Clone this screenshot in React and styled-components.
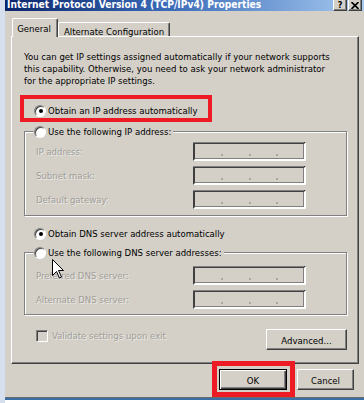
import React from "react";
import styled, { createGlobalStyle, css } from "styled-components";

const FONT = `"DejaVu Sans Condensed", "Liberation Sans", Arial, sans-serif`;
const FACE = "#d4d0c8";
const SHADOW = "#808080";
const DARK = "#404040";
const RED = "#ed1c24";

const Global = createGlobalStyle`
  html, body { margin: 0; padding: 0; background: #d5dfee; }
  body { font-family: ${FONT}; font-size: 9.5px; color: #000; }
  #root { width: 364px; height: 403px; overflow: hidden; }
  * { box-sizing: border-box; }
`;

const Screen = styled.div`
  width: 364px;
  height: 403px;
  display: flex;
  padding-left: 5px;
`;

const Window = styled.div`
  flex: 1;
  display: flex;
  flex-direction: column;
  background: #fff;
`;

const TitleBar = styled.div`
  height: 11px;
  flex: none;
  display: flex;
  align-items: flex-start;
  overflow: hidden;
  background: linear-gradient(to right, #0a246a 0%, #3a6ab8 45%, #a6caf0 100%);
`;

const Title = styled.div`
  flex: 1;
  color: #fff;
  font-weight: bold;
  font-size: 10.2px;
  line-height: 12px;
  margin-top: -1px;
  padding-left: 2px;
  white-space: nowrap;
`;

const CaptionButtons = styled.div`
  display: flex;
  gap: 1px;
  margin-right: 2px;
  margin-top: -1px;
`;

const CaptionButton = styled.div`
  width: 14px;
  height: 12px;
  background: ${FACE};
  border: 1px solid;
  border-color: #fff ${DARK} ${DARK} #fff;
  box-shadow: inset -1px -1px ${SHADOW};
  display: flex;
  align-items: center;
  justify-content: center;
  font: bold 9px ${FONT};
  line-height: 9px;
`;

const Body = styled.div`
  height: 386px;
  flex: none;
  background: ${FACE};
  padding: 7px 5px 0 6px;
  display: flex;
  flex-direction: column;
`;

const EdgeLine = styled.div`
  flex: none;
  height: ${(p) => p.$h}px;
  background: ${(p) => p.$c};
`;

const TabStrip = styled.div`
  display: flex;
  align-items: flex-end;
  height: 18px;
  padding-left: 1px;
  position: relative;
  z-index: 1;
`;

const Tab = styled.div`
  width: ${(p) => p.$w}px;
  height: ${(p) => (p.$active ? 19 : 14)}px;
  margin-bottom: ${(p) => (p.$active ? -1 : 0)}px;
  background: ${FACE};
  border-top: 1px solid #fff;
  border-left: 1px solid #fff;
  border-right: 1px solid ${DARK};
  box-shadow: inset -1px 0 ${SHADOW};
  border-radius: 2px 2px 0 0;
  display: flex;
  justify-content: center;
  padding-top: ${(p) => (p.$active ? 4 : 3)}px;
  padding-right: ${(p) => (p.$active ? 2 : 0)}px;
  line-height: 11px;
  white-space: nowrap;
`;

const Panel = styled.div`
  width: 348px;
  height: 328px;
  border: 1px solid;
  border-color: #fff ${DARK} ${DARK} #fff;
  box-shadow: inset -1px -1px ${SHADOW};
  display: flex;
  flex-direction: column;
`;

const Para = styled.p`
  margin: 14px 0 0 12px;
  line-height: 12px;
  white-space: nowrap;
`;

const Highlight = styled.div`
  margin: 8px 0 0 8px;
  width: 192px;
  border: 4px solid ${RED};
  padding: 5px 0 1px 10px;
`;

const OptionRow = styled.div`
  display: flex;
  align-items: center;
  gap: 2px;
  height: 13px;
  margin-left: ${(p) => p.$ml || 0}px;
  margin-top: ${(p) => p.$mt || 0}px;
  white-space: nowrap;
`;

const Radio = styled.span`
  flex: none;
  width: 12px;
  height: 12px;
  border-radius: 50%;
  background: #fff;
  border: 1px solid;
  border-color: ${SHADOW} #fff #fff ${SHADOW};
  box-shadow: inset 1px 1px ${DARK}, 0 0 0 0.5px ${FACE};
  display: flex;
  align-items: center;
  justify-content: center;
  ${(p) =>
    p.$checked &&
    css`
      &::after {
        content: "";
        width: 4px;
        height: 4px;
        border-radius: 50%;
        background: #000;
        margin: 1px 0 0 1px;
      }
    `}
`;

const Group = styled.div`
  position: relative;
  margin: ${(p) => p.$mt}px 0 0 12px;
  width: 323px;
  border: 1px solid ${SHADOW};
  box-shadow: inset 1px 1px #fff, 1px 1px #fff;
  padding: 0 0 ${(p) => p.$pb}px 11px;
`;

const Legend = styled.div`
  display: flex;
  align-items: center;
  gap: 2px;
  width: fit-content;
  height: 13px;
  margin: -7px 0 0 -2px;
  background: ${FACE};
  padding-right: 2px;
  white-space: nowrap;
`;

const Fields = styled.div`
  display: flex;
  flex-direction: column;
  gap: 5px;
  padding-top: ${(p) => p.$pt}px;
`;

const FieldRow = styled.div`
  display: grid;
  grid-template-columns: 157px 113px;
  align-items: center;
  height: 19px;
`;

const DisabledLabel = styled.span`
  color: #a19e98;
  text-shadow: 1px 1px 0 rgba(255, 255, 255, 0.55);
  white-space: nowrap;
`;

const IpBox = styled.div`
  height: 19px;
  border: 2px solid;
  border-color: ${DARK} #fff #fff ${DARK};
  box-shadow: -1px -1px 0 ${SHADOW} inset;
  display: flex;
  align-items: flex-end;
  padding-bottom: 3px;
  background: ${FACE};
  position: relative;
  &::before {
    content: "";
    position: absolute;
    left: -2px;
    top: -2px;
    right: 0;
    height: 1px;
    background: ${SHADOW};
  }
`;

const Seg = styled.span`
  flex: 1;
`;

const Dot = styled.span`
  width: 2px;
  height: 2px;
  background: #a8a6a2;
`;

const BottomRow = styled.div`
  display: flex;
  justify-content: space-between;
  align-items: flex-start;
  margin: 14px 11px 0 24px;
`;

const CheckRow = styled.div`
  display: flex;
  align-items: center;
  gap: 4px;
  height: 13px;
`;

const CheckBox = styled.span`
  width: 12px;
  height: 12px;
  border: 1px solid;
  border-color: ${SHADOW} #fff #fff ${SHADOW};
  box-shadow: inset 1px 1px ${DARK};
  background: ${FACE};
`;

const Button = styled.div`
  position: relative;
  width: ${(p) => p.$w}px;
  height: 21px;
  background: ${FACE};
  display: flex;
  align-items: center;
  justify-content: center;
  padding-top: 1px;
  border: 1px solid;
  border-color: #fff ${DARK} ${DARK} #fff;
  box-shadow: inset -1px -1px ${SHADOW};
  ${(p) =>
    p.$default &&
    css`
      border: 1px solid #000;
      box-shadow: inset 1px 1px #fff, inset -1px -1px ${DARK}, inset -2px -2px ${SHADOW};
    `}
`;

const Footer = styled.div`
  display: flex;
  justify-content: flex-end;
  gap: 10px;
  margin: 5px 5px 0 0;
`;

const Annotation = styled.div`
  position: absolute;
  left: -8px;
  top: -9px;
  right: -9px;
  bottom: -8px;
  border: 5px solid ${RED};
  pointer-events: none;
`;

const Cursor = styled.svg`
  position: absolute;
  left: 27px;
  top: 6px;
`;

const IpField = () => (
  <IpBox>
    <Seg />
    <Dot />
    <Seg />
    <Dot />
    <Seg />
    <Dot />
    <Seg />
  </IpBox>
);

const Field = ({ label }) => (
  <FieldRow>
    <DisabledLabel>{label}</DisabledLabel>
    <IpField />
  </FieldRow>
);

export default function App() {
  return (
    <>
      <Global />
      <Screen>
        <Window>
          <TitleBar>
            <Title>Internet Protocol Version 4 (TCP/IPv4) Properties</Title>
            <CaptionButtons>
              <CaptionButton>?</CaptionButton>
              <CaptionButton>
                <svg width="8" height="7" viewBox="0 0 8 7">
                  <path d="M0.5 0 L7.5 7 M7.5 0 L0.5 7" stroke="#000" strokeWidth="1.6" />
                </svg>
              </CaptionButton>
            </CaptionButtons>
          </TitleBar>
          <Body>
            <TabStrip>
              <Tab $active $w={46}>General</Tab>
              <Tab $w={112}>Alternate Configuration</Tab>
            </TabStrip>
            <Panel>
              <Para>
                You can get IP settings assigned automatically if your network supports
                <br />
                this capability. Otherwise, you need to ask your network administrator
                <br />
                for the appropriate IP settings.
              </Para>
              <Highlight>
                <OptionRow>
                  <Radio $checked />
                  <span>Obtain an IP address automatically</span>
                </OptionRow>
              </Highlight>
              <Group $mt={9} $pb={6}>
                <Legend>
                  <Radio />
                  <span>Use the following IP address:</span>
                </Legend>
                <Fields $pt={4}>
                  <Field label="IP address:" />
                  <Field label="Subnet mask:" />
                  <Field label="Default gateway:" />
                </Fields>
              </Group>
              <OptionRow $ml={22} $mt={11}>
                <Radio $checked />
                <span>Obtain DNS server address automatically</span>
              </OptionRow>
              <Group $mt={12} $pb={5}>
                <Legend>
                  <Radio />
                  <span>Use the following DNS server addresses:</span>
                </Legend>
                <Fields $pt={7}>
                  <Field label="Preferred DNS server:" />
                  <Field label="Alternate DNS server:" />
                </Fields>
                <Cursor width="13" height="20" viewBox="0 0 13 20">
                  <path
                    d="M0.5 0.5 L0.5 16.5 L4.5 12.5 L7.5 19 L9.5 18 L6.5 11.5 L11.5 11.5 Z"
                    fill="#fff"
                    stroke="#000"
                    strokeWidth="1"
                    strokeLinejoin="miter"
                  />
                </Cursor>
              </Group>
              <BottomRow>
                <CheckRow>
                  <CheckBox />
                  <DisabledLabel>Validate settings upon exit</DisabledLabel>
                </CheckRow>
                <Button $w={81}>Advanced...</Button>
              </BottomRow>
            </Panel>
            <Footer>
              <Button $w={68} $default>
                OK
                <Annotation />
              </Button>
              <Button $w={57}>Cancel</Button>
            </Footer>
          </Body>
          <EdgeLine $h={1} $c="#6b6b6b" />
          <EdgeLine $h={2} $c="#3a6ea5" />
        </Window>
      </Screen>
    </>
  );
}
